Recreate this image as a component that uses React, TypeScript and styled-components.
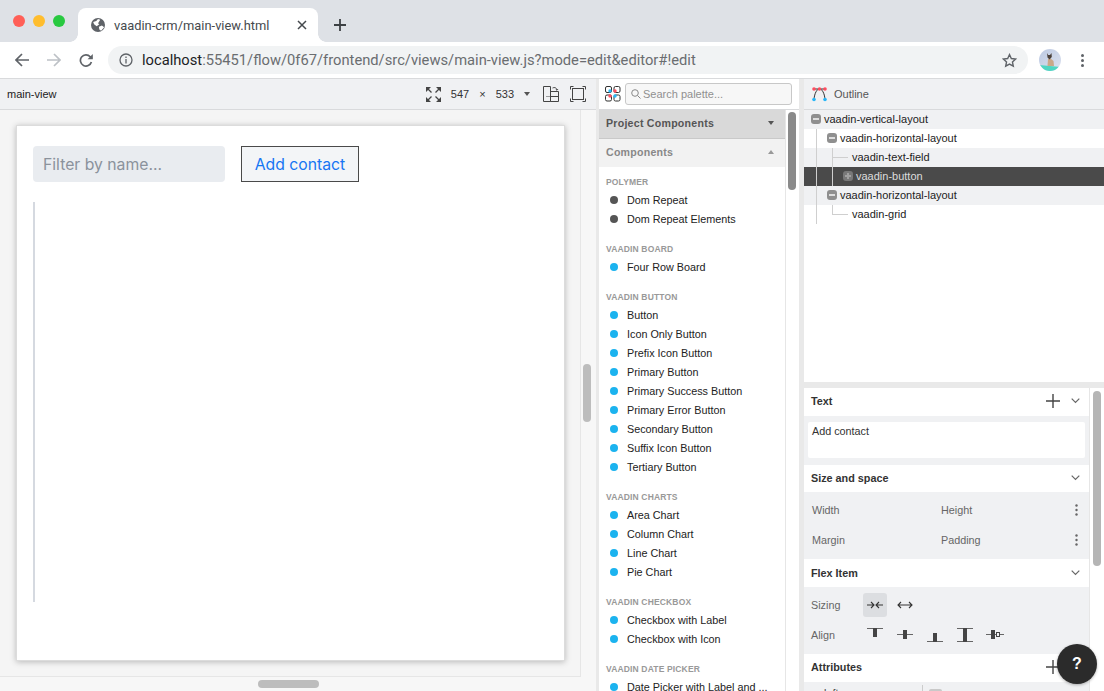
import React from 'react';
import styled, { createGlobalStyle } from 'styled-components';

const GlobalStyle = createGlobalStyle`
  html, body {
    margin: 0;
    padding: 0;
    background: #fff;
  }
  * {
    box-sizing: border-box;
  }
`;

const Page = styled.div`
  position: relative;
  width: 1104px;
  height: 691px;
  overflow: hidden;
  display: flex;
  flex-direction: column;
  font-family: "Liberation Sans", Arial, sans-serif;
  color: #222;
`;

/* browser chrome */
const TabStrip = styled.div`
  height: 42px;
  flex: none;
  display: flex;
  align-items: flex-end;
  background: #dee1e6;
  padding-left: 78px;
`;

const Lights = styled.div`
  position: absolute;
  left: 13px;
  top: 15px;
  display: flex;
  gap: 8px;
`;

const Light = styled.span<{ $color: string }>`
  width: 12px;
  height: 12px;
  border-radius: 50%;
  background: ${p => p.$color};
`;

const Tab = styled.div`
  position: relative;
  width: 240px;
  height: 34px;
  background: #fff;
  border-radius: 8px 8px 0 0;
  display: flex;
  align-items: center;
  padding-left: 13px;
  font-family: Roboto, sans-serif;
  font-size: 12.9px;
  color: #45494d;
  &::before,
  &::after {
    content: '';
    position: absolute;
    bottom: 0;
    width: 8px;
    height: 8px;
  }
  &::before {
    left: -8px;
    background: radial-gradient(circle at 0 0, transparent 7.5px, #fff 8px);
  }
  &::after {
    right: -8px;
    background: radial-gradient(circle at 100% 0, transparent 7.5px, #fff 8px);
  }
`;

const TabTitle = styled.span`
  flex: 1;
  margin-left: 9px;
`;

const NewTab = styled.div`
  height: 34px;
  margin-left: 16px;
  display: flex;
  align-items: center;
`;

const AddressRow = styled.div`
  height: 36px;
  flex: none;
  display: flex;
  align-items: center;
  background: #fff;
  padding-left: 15px;
`;

const NavIcons = styled.div`
  display: flex;
  gap: 18px;
  width: 93px;
`;

const Omnibox = styled.div`
  width: 920px;
  height: 28px;
  border-radius: 14px;
  background: #f1f3f4;
  display: flex;
  align-items: center;
  padding: 0 10px 0 11px;
  font-family: Roboto, sans-serif;
  font-size: 14.72px;
  color: #6a6d70;
`;

const Url = styled.span`
  flex: 1;
  margin-left: 9px;
  white-space: nowrap;
  b {
    font-weight: 400;
    color: #202124;
  }
`;

const Avatar = styled.div`
  margin-left: 11px;
  width: 22px;
  height: 22px;
  flex: none;
`;

const Kebab = styled.div`
  margin-left: 20px;
  display: flex;
`;

/* editor */
const Editor = styled.div`
  flex: 1;
  min-height: 0;
  display: flex;
  border-top: 1px solid #d9dadc;
  background: #e9e9e9;
`;

const DesignPane = styled.div`
  width: 596px;
  flex: none;
  display: flex;
  flex-direction: column;
  background: #f7f7f7;
`;

const Toolbar = styled.div`
  height: 31px;
  flex: none;
  display: flex;
  align-items: center;
  background: #f0f1f3;
  border-bottom: 1px solid #d9dadc;
  padding-left: 7px;
  font-size: 11px;
`;

const ToolbarTitle = styled.span`
  flex: 1;
`;

const SizeBox = styled.div`
  display: flex;
  align-items: center;
  gap: 10px;
  margin-right: 13px;
  font-size: 11px;
  color: #333;
`;

const ToolIcons = styled.div`
  display: flex;
  gap: 11px;
  margin-right: 10px;
`;

const Viewport = styled.div`
  position: relative;
  flex: 1;
  min-height: 0;
`;

const CanvasArea = styled.div`
  width: 581px;
  height: 567px;
  padding: 15px 0 0 16px;
  background: #f5f5f5;
  border-right: 1px solid #e6e6e6;
  border-bottom: 1px solid #e6e6e6;
`;

const Card = styled.div`
  width: 549px;
  height: 536px;
  background: #fff;
  border: 1px solid #dcdcdc;
  box-shadow: 0 1px 6px rgba(0, 0, 0, 0.25);
  padding: 20px 16px;
`;

const FilterRow = styled.div`
  display: flex;
  gap: 16px;
`;

const FilterField = styled.div`
  width: 192px;
  height: 36px;
  border-radius: 4px;
  background: #e9ecf0;
  display: flex;
  align-items: center;
  padding-left: 10px;
  font-family: Inter, sans-serif;
  font-size: 15.75px;
  color: #8b929c;
`;

const AddButton = styled.div`
  width: 118px;
  height: 36px;
  background: #f3f5f7;
  border: 1px solid #4a4a4a;
  display: flex;
  align-items: center;
  justify-content: center;
  font-family: Inter, sans-serif;
  font-size: 15.75px;
  color: #1676f3;
`;

const GridStub = styled.div`
  width: 2px;
  height: 400px;
  margin-top: 20px;
  background: #d5d9e0;
`;

const ThumbV = styled.div`
  position: absolute;
  left: 583px;
  top: 254px;
  width: 8px;
  height: 58px;
  border-radius: 4px;
  background: #bdbdbd;
`;

const ThumbH = styled.div`
  position: absolute;
  left: 258px;
  bottom: 3px;
  width: 61px;
  height: 8px;
  border-radius: 4px;
  background: #bdbdbd;
`;

/* palette */
const PalettePane = styled.div`
  width: 200px;
  flex: none;
  margin-left: 3px;
  display: flex;
  flex-direction: column;
  background: #fff;
  min-height: 0;
`;

const SearchBar = styled.div`
  height: 31px;
  flex: none;
  display: flex;
  align-items: center;
  padding-left: 6px;
  border-bottom: 1px solid #d9dadc;
`;

const SearchInput = styled.div`
  width: 167px;
  height: 22px;
  margin-left: 4px;
  border: 1px solid #c8c8c8;
  border-radius: 3px;
  background: #f7f7f7;
  display: flex;
  align-items: center;
  padding-left: 5px;
  font-size: 11px;
  color: #909090;
`;

const SearchText = styled.span`
  margin-left: 2px;
`;

const PaletteScroll = styled.div`
  position: relative;
  flex: 1;
  min-height: 0;
  overflow: hidden;
`;

const PaletteList = styled.div`
  width: 187px;
  border-right: 1px solid #e6e6e6;
  height: 100%;
`;

const Accordion = styled.div<{ $open?: boolean }>`
  height: ${p => (p.$open ? 29 : 28)}px;
  display: flex;
  align-items: center;
  justify-content: space-between;
  padding: 0 11px 2px 7px;
  font-size: 10.6px;
  font-weight: 700;
  letter-spacing: 0.25px;
  color: ${p => (p.$open ? '#555' : '#888')};
  background: ${p => (p.$open ? '#d9d9d9' : '#f2f2f2')};
  border-bottom: ${p => (p.$open ? '1px solid #c9c9c9' : 'none')};
`;

const Caret = styled.span<{ $up?: boolean }>`
  flex: none;
  width: 0;
  height: 0;
  border-left: 3.5px solid transparent;
  border-right: 3.5px solid transparent;
  ${p => (p.$up ? 'border-bottom: 4px solid #999;' : 'border-top: 4px solid #555;')}
`;

const Groups = styled.div`
  padding-top: 5.5px;
`;

const Group = styled.div`
  margin-bottom: 11px;
`;

const GroupTitle = styled.div`
  height: 18px;
  padding-left: 7px;
  line-height: 18px;
  font-size: 8.5px;
  font-weight: 700;
  letter-spacing: 0.15px;
  color: #999;
  text-transform: uppercase;
`;

const Item = styled.div`
  height: 19px;
  display: flex;
  align-items: center;
  padding-left: 11px;
  font-size: 10.8px;
  color: #222;
  white-space: nowrap;
`;

const Dot = styled.span<{ $dark?: boolean }>`
  width: 8px;
  height: 8px;
  flex: none;
  border-radius: 50%;
  margin-right: 9px;
  background: ${p => (p.$dark ? '#555' : '#1bb3ef')};
`;

const PaletteThumb = styled.div`
  position: absolute;
  left: 189px;
  top: 2px;
  width: 8px;
  height: 78px;
  border-radius: 4px;
  background: #8a8a8a;
`;

/* right side */
const RightPane = styled.div`
  flex: 1;
  min-width: 0;
  margin-left: 5px;
  display: flex;
  flex-direction: column;
`;

const OutlinePane = styled.div`
  height: 303px;
  flex: none;
  background: #fff;
`;

const OutlineHeader = styled.div`
  height: 31px;
  display: flex;
  align-items: center;
  padding-left: 7px;
  font-size: 11px;
  color: #555;
  background: #f0f1f3;
  border-bottom: 1px solid #d9dadc;
`;

const OutlineTitle = styled.span`
  margin-left: 6px;
`;

const TreeRow = styled.div<{ $depth: number; $alt?: boolean; $selected?: boolean }>`
  position: relative;
  height: 19px;
  display: flex;
  align-items: center;
  padding: 0 0 1px ${p => 7 + p.$depth * 16}px;
  font-size: 11px;
  color: ${p => (p.$selected ? '#ddd' : '#222')};
  background: ${p => (p.$selected ? '#4a4a4a' : p.$alt ? '#f0f1f3' : '#fff')};
`;

const Toggle = styled.span<{ $plus?: boolean }>`
  position: relative;
  width: 10px;
  height: 10px;
  flex: none;
  margin-right: 3px;
  border-radius: 3px;
  background: ${p => (p.$plus ? '#787878' : '#8f8f8f')};
  &::before {
    content: '';
    position: absolute;
    left: 2px;
    right: 2px;
    top: 4px;
    height: 2px;
    background: ${p => (p.$plus ? '#a0a0a0' : '#ddd')};
  }
  ${p =>
    p.$plus &&
    `&::after {
      content: '';
      position: absolute;
      top: 2px;
      bottom: 2px;
      left: 4px;
      width: 2px;
      background: #a0a0a0;
    }`}
`;

const Leaf = styled.span`
  margin-left: 9px;
`;

const GuideV = styled.span<{ $x: number; $short?: boolean }>`
  position: absolute;
  left: ${p => p.$x}px;
  top: 0;
  height: ${p => (p.$short ? 10 : 19)}px;
  width: 1px;
  background: #cfcfcf;
`;

const GuideH = styled.span<{ $x: number }>`
  position: absolute;
  left: ${p => p.$x}px;
  top: 9px;
  width: 16px;
  height: 1px;
  background: #cfcfcf;
`;

const PropsPane = styled.div`
  position: relative;
  flex: 1;
  min-height: 0;
  margin-top: 6px;
  overflow: hidden;
  background: #fff;
  display: flex;
`;

const PropsBody = styled.div`
  width: 286px;
  flex: none;
  border-right: 1px solid #e6e6e6;
`;

const SectionHead = styled.div<{ $h?: number; $low?: boolean }>`
  height: ${p => p.$h ?? 28}px;
  display: flex;
  align-items: center;
  padding: 0 9px ${p => (p.$low ? 1 : 2)}px 7px;
  background: #fff;
  font-size: 10.8px;
  font-weight: 700;
  color: #333;
`;

const SectionTitle = styled.span`
  flex: 1;
`;

const HeadIcons = styled.div`
  display: flex;
  align-items: center;
  gap: 11px;
`;

const ChevronGap = styled.span`
  width: 9px;
`;

const TextBody = styled.div`
  height: 49px;
  padding: 6px 4px 0;
  background: #f0f1f3;
`;

const TextArea = styled.div`
  height: 36px;
  background: #fff;
  border-radius: 2px;
  padding: 3px 4px;
  font-size: 10.8px;
  color: #333;
`;

const FieldsBody = styled.div`
  height: 67px;
  padding: 3px 11px 0 8px;
  background: #f0f1f3;
`;

const FieldRow = styled.div`
  height: 30px;
  display: flex;
  align-items: center;
  font-size: 10.8px;
  color: #666;
`;

const FieldCell = styled.span`
  width: 129px;
`;

const Spacer = styled.span`
  flex: 1;
`;

const SizingRow = styled.div`
  height: 30px;
  margin-left: -1px;
  display: flex;
  align-items: center;
  font-size: 10.8px;
  color: #666;
`;

const RowLabel = styled.span`
  width: 52px;
`;

const IconChip = styled.span<{ $active?: boolean }>`
  width: 24px;
  height: 24px;
  margin-right: 6px;
  display: flex;
  align-items: center;
  justify-content: center;
  border-radius: 3px;
  background: ${p => (p.$active ? '#dcdee1' : 'transparent')};
`;

const AttrRow = styled.div`
  height: 12px;
  display: flex;
  background: #f0f1f3;
  padding-top: 3px;
  font-size: 10.8px;
  color: #444;
`;

const AttrName = styled.span`
  width: 119px;
  padding: 2px 0 0 20px;
  border-right: 1px solid #ccc;
`;

const AttrBox = styled.span`
  width: 13px;
  height: 12px;
  margin: 4px 0 0 6px;
  border-radius: 2px;
  background: #c9c9c9;
`;

const PropsThumb = styled.div`
  position: absolute;
  left: 289px;
  top: 3px;
  width: 8px;
  height: 175px;
  border-radius: 4px;
  background: #b5b5b5;
`;

const HelpButton = styled.div`
  position: absolute;
  right: 7px;
  bottom: 7px;
  width: 40px;
  height: 40px;
  border-radius: 50%;
  background: #2b2b2b;
  color: #fff;
  display: flex;
  align-items: center;
  justify-content: center;
  font-size: 16px;
  font-weight: 700;
  box-shadow: 0 1px 3px rgba(0, 0, 0, 0.3);
`;

const Svg: React.FC<{ w: number; h?: number; children: React.ReactNode; stroke?: string; sw?: number }> = ({
  w,
  h,
  children,
  stroke = '#5f6368',
  sw = 2,
}) => (
  <svg width={w} height={h ?? w} viewBox={`0 0 ${w} ${h ?? w}`} fill="none" stroke={stroke} strokeWidth={sw} style={{ display: 'block', flex: 'none' }}>
    {children}
  </svg>
);

const groups = [
  { title: 'Polymer', dark: true, items: ['Dom Repeat', 'Dom Repeat Elements'] },
  { title: 'Vaadin Board', items: ['Four Row Board'] },
  {
    title: 'Vaadin Button',
    items: ['Button', 'Icon Only Button', 'Prefix Icon Button', 'Primary Button', 'Primary Success Button', 'Primary Error Button', 'Secondary Button', 'Suffix Icon Button', 'Tertiary Button'],
  },
  { title: 'Vaadin Charts', items: ['Area Chart', 'Column Chart', 'Line Chart', 'Pie Chart'] },
  { title: 'Vaadin Checkbox', items: ['Checkbox with Label', 'Checkbox with Icon'] },
  { title: 'Vaadin Date Picker', items: ['Date Picker with Label and ...'] },
];

const Chevron = () => (
  <Svg w={9} h={6} stroke="#666" sw={1.2}>
    <path d="M.7.7 4.500 4.500 8.300.7" />
  </Svg>
);

const Dots = () => (
  <Svg w={3} h={12} stroke="none">
    <g fill="#666">
      <circle cx="1.5" cy="1.5" r="1.2" />
      <circle cx="1.5" cy="6" r="1.2" />
      <circle cx="1.5" cy="10.5" r="1.2" />
    </g>
  </Svg>
);

const PlusIcon = () => (
  <Svg w={14} stroke="#444" sw={1.4}>
    <path d="M7 0v14M0 7h14" />
  </Svg>
);

const OutlineIcon = () => (
  <svg width="17" height="16" viewBox="0 0 17 16" fill="none" style={{ display: 'block' }}>
    <path d="M3 13.500C3.500 7 6 3 8.500 3S13.500 7 14 13.500M3 3h11" stroke="#333" strokeWidth="1" />
    <circle cx="3" cy="13.500" r="1.800" fill="#29b6f6" />
    <circle cx="14" cy="13.500" r="1.800" fill="#29b6f6" />
    <circle cx="3" cy="3" r="1.800" fill="#ff4d5e" />
    <circle cx="8.500" cy="3" r="1.800" fill="#ff4d5e" />
    <circle cx="14" cy="3" r="1.800" fill="#ff4d5e" />
  </svg>
);

const PaletteIcon = () => (
  <svg width="16" height="16" viewBox="0 0 16 16" fill="none" stroke="#333" strokeWidth="1" style={{ display: 'block', flex: 'none' }}>
    <rect x="0.5" y="0.5" width="6" height="6" rx="1.5" />
    <rect x="9" y="0.5" width="6" height="6" rx="1.5" />
    <rect x="0.5" y="9" width="6" height="6" rx="1.5" />
    <rect x="9" y="9" width="6" height="6" rx="1.5" />
    <g stroke="none">
      <circle cx="10" cy="5" r="1.7" fill="#ff4d5e" />
      <circle cx="5" cy="5" r="1.7" fill="#29b6f6" />
      <circle cx="5" cy="10" r="1.7" fill="#ff4d5e" />
      <circle cx="10" cy="10" r="1.7" fill="#29b6f6" />
    </g>
  </svg>
);

const AlignIcon: React.FC<{ kind: number }> = ({ kind }) => (
  <svg width="18" height="16" viewBox="0 0 18 16" fill="none" style={{ display: 'block' }}>
    {kind === 0 && <><path d="M1 1.500h16" stroke="#666" /><rect x="7" y="1" width="4" height="9" fill="#444" /></>}
    {kind === 1 && <><path d="M1 7.500h16" stroke="#666" /><rect x="7" y="3" width="4" height="9" fill="#444" /></>}
    {kind === 2 && <><path d="M1 14.500h16" stroke="#666" /><rect x="7" y="6" width="4" height="9" fill="#444" /></>}
    {kind === 3 && <><path d="M1 1.500h16M1 14.500h16" stroke="#666" /><rect x="7" y="1" width="4" height="14" fill="#444" /></>}
    {kind === 4 && <><path d="M0 7.500h18" stroke="#666" /><rect x="5" y="3" width="4" height="9" fill="#444" /><rect x="10.500" y="5.500" width="3" height="4" fill="#f0f1f3" stroke="#444" /></>}
  </svg>
);

const App: React.FC = () => {
  return (
    <Page>
      <GlobalStyle />
      <Lights>
        <Light $color="#ff5f57" />
        <Light $color="#ffbd2e" />
        <Light $color="#28c940" />
      </Lights>
      <TabStrip>
        <Tab>
          <svg width="14" height="14" viewBox="0 0 16 16" style={{ display: 'block', flex: 'none' }}>
            <circle cx="8" cy="8" r="8" fill="#5f6368" />
            <path d="M2.500 4.500 6 3.500 8 1 10.500 2 9 4.500 8 6 9.500 7 6.500 9.500 3.500 7ZM9 10 12.500 8.500 15 10.500 11.500 14.500 9.500 13Z" fill="#fff" />
          </svg>
          <TabTitle>vaadin-crm/main-view.html</TabTitle>
          <svg width="10" height="10" viewBox="0 0 10 10" stroke="#45494d" strokeWidth="1.5" style={{ marginRight: 11 }}>
            <path d="M1 1l8 8M9 1 1 9" />
          </svg>
        </Tab>
        <NewTab>
          <Svg w={12} stroke="#3c4043" sw={1.8}>
            <path d="M6 0v12M0 6h12" />
          </Svg>
        </NewTab>
      </TabStrip>
      <AddressRow>
        <NavIcons>
          <Svg w={14} sw={1.7}>
            <path d="M14 7H1.500M7 1 1 7l6 6" />
          </Svg>
          <Svg w={14} stroke="#bdc1c6" sw={1.7}>
            <path d="M0 7h12.500M7 1l6 6-6 6" />
          </Svg>
          <Svg w={14} sw={1.7}>
            <path d="M12.400 9a5.600 5.600 0 1 1-1.200-5.300L13 5.500" />
            <path d="M13.800 1v5.200H8.600z" fill="#5f6368" stroke="none" />
          </Svg>
        </NavIcons>
        <Omnibox>
          <Svg w={14} sw={1.3}>
            <circle cx="7" cy="7" r="6" />
            <path d="M7 6v4.500M7 3.500v1.500" />
          </Svg>
          <Url>
            <b>localhost</b>:55451/flow/0f67/frontend/src/views/main-view.js?mode=edit&amp;editor#!edit
          </Url>
          <svg width="15" height="15" viewBox="0 0 24 24" fill="none" stroke="#5f6368" strokeWidth="2.2" style={{ display: 'block', marginRight: 1 }}>
            <path d="M12 2.500l2.900 6.300 6.900.8-5.100 4.700 1.400 6.800-6.100-3.400-6.100 3.400 1.400-6.800-5.100-4.700 6.900-.8z" />
          </svg>
        </Omnibox>
        <Avatar>
          <svg width="22" height="22" viewBox="0 0 22 22">
            <defs>
              <linearGradient id="sky" x1="0" y1="0" x2="1" y2="1">
                <stop offset="0" stopColor="#bcc9e2" />
                <stop offset="1" stopColor="#dde2ef" />
              </linearGradient>
              <clipPath id="av">
                <circle cx="11" cy="11" r="11" />
              </clipPath>
            </defs>
            <g clipPath="url(#av)">
              <rect width="22" height="22" fill="url(#sky)" />
              <path d="M0 16 22 18V22H0Z" fill="#4fd6c2" />
              <path d="M9 10 8.500 17H15L14.500 12 11.500 9.500Z" fill="#c9a888" />
              <path d="M8 4 9.200 6H11L12.500 4 12.800 8 10.500 10.500 8.500 8.500Z" fill="#4a403a" />
            </g>
          </svg>
        </Avatar>
        <Kebab>
          <Svg w={3} h={13} stroke="none">
            <g fill="#5f6368">
              <circle cx="1.5" cy="1.5" r="1.5" />
              <circle cx="1.5" cy="6.5" r="1.5" />
              <circle cx="1.5" cy="11.5" r="1.5" />
            </g>
          </Svg>
        </Kebab>
      </AddressRow>
      <Editor>
        <DesignPane>
          <Toolbar>
            <ToolbarTitle>main-view</ToolbarTitle>
            <SizeBox>
              <svg width="15" height="15" viewBox="0 0 15 15" style={{ display: 'block', flex: 'none' }}>
                <path d="M2 2l3.500 3.500M13 2 9.500 5.500M2 13l3.500-3.500M13 13 9.500 9.500" stroke="#444" strokeWidth="1.300" />
                <path d="M0 0h5L0 5zM15 0v5L10 0zM0 15v-5l5 5zM15 15h-5l5-5z" fill="#444" />
              </svg>
              <span>547</span>
              <span>×</span>
              <span>533</span>
              <Caret />
            </SizeBox>
            <ToolIcons>
              <Svg w={16} stroke="#444" sw={1}>
                <path d="M.5.5h7v15h-7zM7.500 5.500h8v10h-8zM7.500 10.500h8" />
                <path d="M3.500 10.500h3" strokeDasharray="1 1" />
                <path d="M9.500 2c2-1 4-.5 4.500 2M12.800 3.300l1.200 1 1-1.300" strokeWidth="0.9" />
              </Svg>
              <Svg w={16} stroke="#444" sw={1}>
                <rect x="2.500" y="2.500" width="11" height="11" />
                <path d="M.5 3.500v-3h3M12.500.5h3v3M.5 12.500v3h3M15.500 12.500v3h-3" />
              </Svg>
            </ToolIcons>
          </Toolbar>
          <Viewport>
            <CanvasArea>
              <Card>
                <FilterRow>
                  <FilterField>Filter by name...</FilterField>
                  <AddButton>Add contact</AddButton>
                </FilterRow>
                <GridStub />
              </Card>
            </CanvasArea>
            <ThumbV />
            <ThumbH />
          </Viewport>
        </DesignPane>
        <PalettePane>
          <SearchBar>
            <PaletteIcon />
            <SearchInput>
              <Svg w={10} stroke="#888" sw={1}>
                <circle cx="4" cy="4" r="3.300" />
                <path d="M6.500 6.500 9.500 9.500" />
              </Svg>
              <SearchText>Search palette...</SearchText>
            </SearchInput>
          </SearchBar>
          <PaletteScroll>
            <PaletteList>
              <Accordion $open>
                Project Components
                <Caret />
              </Accordion>
              <Accordion>
                Components
                <Caret $up />
              </Accordion>
              <Groups>
                {groups.map(group => (
                  <Group key={group.title}>
                    <GroupTitle>{group.title}</GroupTitle>
                    {group.items.map(item => (
                      <Item key={item}>
                        <Dot $dark={group.dark} />
                        {item}
                      </Item>
                    ))}
                  </Group>
                ))}
              </Groups>
            </PaletteList>
            <PaletteThumb />
          </PaletteScroll>
        </PalettePane>
        <RightPane>
          <OutlinePane>
            <OutlineHeader>
              <OutlineIcon />
              <OutlineTitle>Outline</OutlineTitle>
            </OutlineHeader>
            <TreeRow $depth={0} $alt>
              <Toggle />
              vaadin-vertical-layout
            </TreeRow>
            <TreeRow $depth={1}>
              <GuideV $x={12} />
              <Toggle />
              vaadin-horizontal-layout
            </TreeRow>
            <TreeRow $depth={2} $alt>
              <GuideV $x={12} />
              <GuideV $x={28} />
              <GuideH $x={28} />
              <Leaf>vaadin-text-field</Leaf>
            </TreeRow>
            <TreeRow $depth={2} $selected>
              <GuideV $x={12} />
              <GuideV $x={28} />
              <Toggle $plus />
              vaadin-button
            </TreeRow>
            <TreeRow $depth={1} $alt>
              <GuideV $x={12} />
              <Toggle />
              vaadin-horizontal-layout
            </TreeRow>
            <TreeRow $depth={2}>
              <GuideV $x={12} />
              <GuideV $x={28} $short />
              <GuideH $x={28} />
              <Leaf>vaadin-grid</Leaf>
            </TreeRow>
          </OutlinePane>
          <PropsPane>
            <PropsBody>
              <SectionHead>
                <SectionTitle>Text</SectionTitle>
                <HeadIcons>
                  <PlusIcon />
                  <Chevron />
                </HeadIcons>
              </SectionHead>
              <TextBody>
                <TextArea>Add contact</TextArea>
              </TextBody>
              <SectionHead $h={27} $low>
                <SectionTitle>Size and space</SectionTitle>
                <Chevron />
              </SectionHead>
              <FieldsBody>
                <FieldRow>
                  <FieldCell>Width</FieldCell>
                  <FieldCell>Height</FieldCell>
                  <Spacer />
                  <Dots />
                </FieldRow>
                <FieldRow>
                  <FieldCell>Margin</FieldCell>
                  <FieldCell>Padding</FieldCell>
                  <Spacer />
                  <Dots />
                </FieldRow>
              </FieldsBody>
              <SectionHead $low>
                <SectionTitle>Flex Item</SectionTitle>
                <Chevron />
              </SectionHead>
              <FieldsBody>
                <SizingRow>
                  <RowLabel>Sizing</RowLabel>
                  <IconChip $active>
                    <Svg w={16} h={10} stroke="#333" sw={1.1}>
                      <path d="M0 5h7M4 2l3 3-3 3M16 5H9M12 2 9 5l3 3" />
                    </Svg>
                  </IconChip>
                  <IconChip>
                    <Svg w={16} h={10} stroke="#333" sw={1.1}>
                      <path d="M1 5h14M4 2 1 5l3 3M12 2l3 3-3 3" />
                    </Svg>
                  </IconChip>
                </SizingRow>
                <SizingRow>
                  <RowLabel>Align</RowLabel>
                  {[0, 1, 2, 3, 4].map(kind => (
                    <IconChip key={kind}>
                      <AlignIcon kind={kind} />
                    </IconChip>
                  ))}
                </SizingRow>
              </FieldsBody>
              <SectionHead>
                <SectionTitle>Attributes</SectionTitle>
                <HeadIcons>
                  <PlusIcon />
                  <ChevronGap />
                </HeadIcons>
              </SectionHead>
              <AttrRow>
                <AttrName>left</AttrName>
                <AttrBox />
              </AttrRow>
            </PropsBody>
            <PropsThumb />
          </PropsPane>
        </RightPane>
      </Editor>
      <HelpButton>?</HelpButton>
    </Page>
  );
};

export default App;
